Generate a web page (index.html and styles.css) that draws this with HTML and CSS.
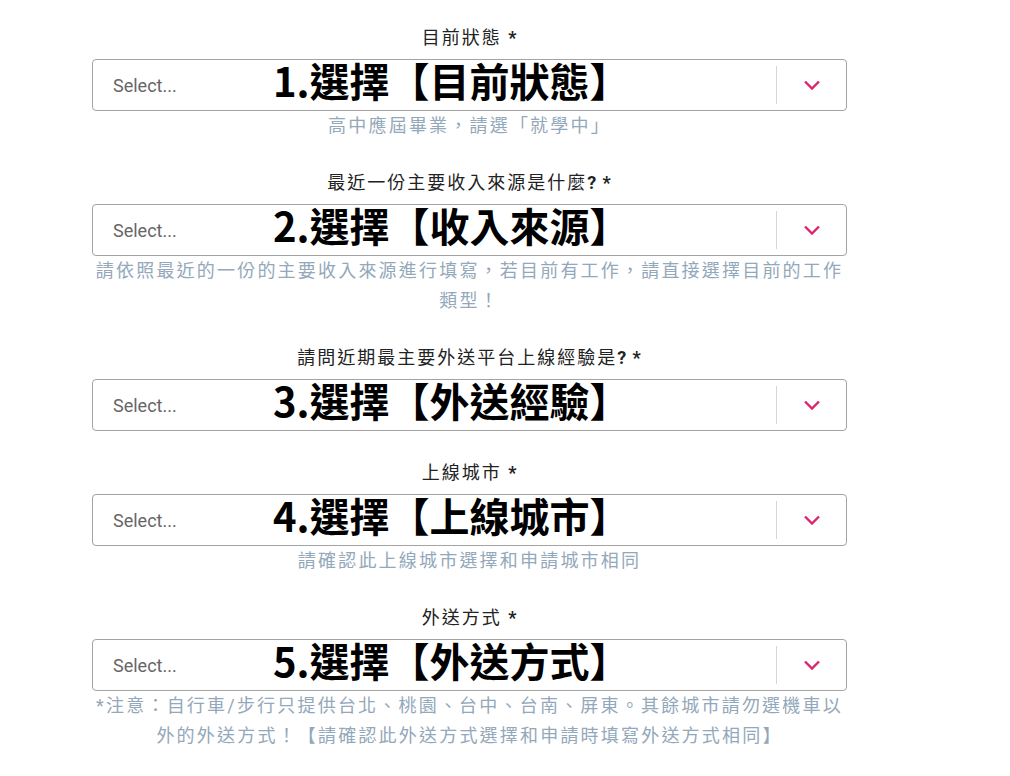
FILE: index.html
```html
<!DOCTYPE html>
<html lang="zh-Hant">
  <head>
    <meta charset="UTF-8" />
    <title>外送夥伴申請</title>
    <link rel="stylesheet" href="styles.css">
  </head>
  <body>
    <div class="form">
      <div class="field">
        <div class="field-label">目前狀態 <b>*</b></div>
        <div class="select">
          <span class="placeholder">Select...</span>
          <span class="note">1.選擇【目前狀態】</span>
          <span class="sep"></span>
          <span class="arrow"><svg width="16" height="10" viewBox="0 0 16 10"><path d="M1 1.5l7 7 7-7" /></svg></span>
        </div>
        <p class="hint">高中應屆畢業，請選「就學中」</p>
      </div>

      <div class="field">
        <div class="field-label">最近一份主要收入來源是什麼<b>? *</b></div>
        <div class="select">
          <span class="placeholder">Select...</span>
          <span class="note">2.選擇【收入來源】</span>
          <span class="sep"></span>
          <span class="arrow"><svg width="16" height="10" viewBox="0 0 16 10"><path d="M1 1.5l7 7 7-7" /></svg></span>
        </div>
        <p class="hint">請依照最近的一份的主要收入來源進行填寫，若目前有工作，請直接選擇目前的工作類型！</p>
      </div>

      <div class="field">
        <div class="field-label">請問近期最主要外送平台上線經驗是<b>? *</b></div>
        <div class="select">
          <span class="placeholder">Select...</span>
          <span class="note">3.選擇【外送經驗】</span>
          <span class="sep"></span>
          <span class="arrow"><svg width="16" height="10" viewBox="0 0 16 10"><path d="M1 1.5l7 7 7-7" /></svg></span>
        </div>
      </div>

      <div class="field">
        <div class="field-label">上線城市 <b>*</b></div>
        <div class="select">
          <span class="placeholder">Select...</span>
          <span class="note">4.選擇【上線城市】</span>
          <span class="sep"></span>
          <span class="arrow"><svg width="16" height="10" viewBox="0 0 16 10"><path d="M1 1.5l7 7 7-7" /></svg></span>
        </div>
        <p class="hint">請確認此上線城市選擇和申請城市相同</p>
      </div>

      <div class="field">
        <div class="field-label">外送方式 <b>*</b></div>
        <div class="select">
          <span class="placeholder">Select...</span>
          <span class="note">5.選擇【外送方式】</span>
          <span class="sep"></span>
          <span class="arrow"><svg width="16" height="10" viewBox="0 0 16 10"><path d="M1 1.5l7 7 7-7" /></svg></span>
        </div>
        <p class="hint">*注意：自行車/步行只提供台北、桃園、台中、台南、屏東。其餘城市請勿選機車以<br>外的外送方式！【請確認此外送方式選擇和申請時填寫外送方式相同】</p>
      </div>
    </div>
  </body>
</html>
```

FILE: styles.css
```css
body {
  margin: 0;
  background: #fff;
  font-family: Roboto, "Noto Sans CJK TC", sans-serif;
  color: #222;
}
.form {
  width: 755px;
  margin-left: 92px;
  padding-top: 26px;
}
.field {
  margin-bottom: 30px;
}
.field-label {
  text-align: center;
  font-size: 18px;
  line-height: 24px;
  letter-spacing: 2px;
  margin-bottom: 9px;
}
.field-label b {
  font-weight: 700;
  letter-spacing: 1px;
}
.select {
  position: relative;
  display: flex;
  align-items: center;
  height: 50px;
  border: 1px solid #a3a3a3;
  border-radius: 4px;
  background: #fff;
}
.placeholder {
  flex: 1;
  padding-left: 20px;
  font-size: 18px;
  color: #666;
}
.note {
  position: absolute;
  left: 180px;
  top: 0;
  font-family: "Noto Sans CJK TC", sans-serif;
  font-weight: 700;
  font-size: 40px;
  line-height: 40px;
  color: #000;
  white-space: nowrap;
}
.sep {
  align-self: stretch;
  width: 1px;
  margin: 6px 0;
  background: #d6d6d6;
}
.arrow {
  width: 69px;
  display: flex;
  justify-content: center;
  align-items: center;
}
.arrow path {
  fill: none;
  stroke: #e0226e;
  stroke-width: 2.4;
}
.hint {
  margin: 0;
  text-align: center;
  font-size: 18px;
  line-height: 30px;
  letter-spacing: 2.2px;
  color: #93a8ba;
}
```
